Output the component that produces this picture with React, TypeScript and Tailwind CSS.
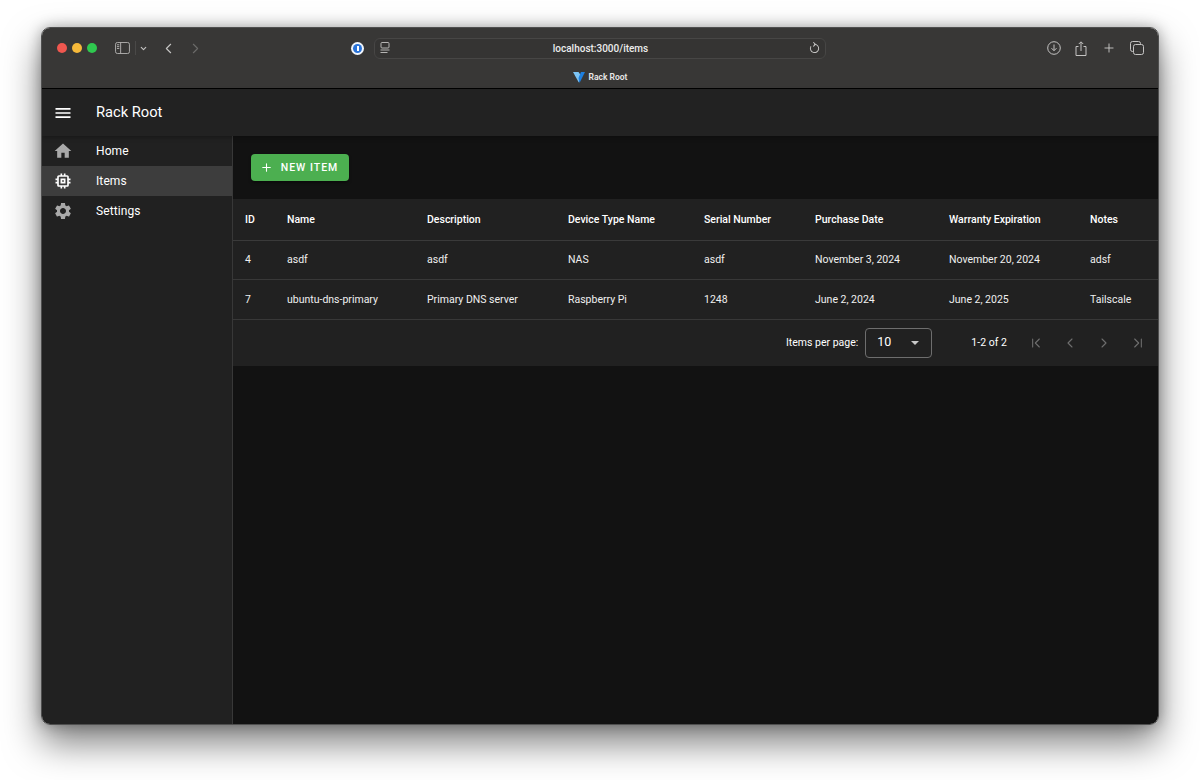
import { ChevronDown, ChevronLeft, ChevronRight, Plus, ChevronFirst, ChevronLast } from "lucide-react";

const columns = [
  { label: "ID", width: "w-[42px]" },
  { label: "Name", width: "w-[140px]" },
  { label: "Description", width: "w-[141px]" },
  { label: "Device Type Name", width: "w-[136px]" },
  { label: "Serial Number", width: "w-[111px]" },
  { label: "Purchase Date", width: "w-[134px]" },
  { label: "Warranty Expiration", width: "w-[141px]" },
  { label: "Notes", width: "w-[81px]" },
];

const rows = [
  ["4", "asdf", "asdf", "NAS", "asdf", "November 3, 2024", "November 20, 2024", "adsf"],
  ["7", "ubuntu-dns-primary", "Primary DNS server", "Raspberry Pi", "1248", "June 2, 2024", "June 2, 2025", "Tailscale"],
];

function MenuIcon() {
  return (
    <svg width="20" height="20" viewBox="0 0 24 24" fill="#ffffff">
      <path d="M3 18h18v-2H3v2zm0-5h18v-2H3v2zm0-7v2h18V6H3z" />
    </svg>
  );
}

function HomeIcon() {
  return (
    <svg width="20" height="20" viewBox="0 0 24 24" fill="#a9a9a9">
      <path d="M10 20v-6h4v6h5v-8h3L12 3 2 12h3v8z" />
    </svg>
  );
}

function ChipIcon() {
  return (
    <svg width="20" height="20" viewBox="0 0 24 24" fill="#ffffff">
      <path d="M15 9H9v6h6V9zm-2 4h-2v-2h2v2zm8-2V9h-2V7c0-1.1-.9-2-2-2h-2V3h-2v2h-2V3H9v2H7c-1.1 0-2 .9-2 2v2H3v2h2v2H3v2h2v2c0 1.1.9 2 2 2h2v2h2v-2h2v2h2v-2h2c1.1 0 2-.9 2-2v-2h2v-2h-2v-2h2zm-4 6H7V7h10v10z" />
    </svg>
  );
}

function GearIcon() {
  return (
    <svg width="20" height="20" viewBox="0 0 24 24" fill="#a9a9a9">
      <path d="M19.14 12.94c.04-.3.06-.61.06-.94 0-.32-.02-.64-.07-.94l2.03-1.58c.18-.14.23-.41.12-.61l-1.92-3.32c-.12-.22-.37-.29-.59-.22l-2.39.96c-.5-.38-1.03-.7-1.62-.94l-.36-2.54c-.04-.24-.24-.41-.48-.41h-3.84c-.24 0-.43.17-.47.41l-.36 2.54c-.59.24-1.13.57-1.62.94l-2.39-.96c-.22-.08-.47 0-.59.22L2.74 8.87c-.12.21-.08.47.12.61l2.03 1.58c-.05.3-.09.63-.09.94s.02.64.07.94l-2.03 1.58c-.18.14-.23.41-.12.61l1.92 3.32c.12.22.37.29.59.22l2.39-.96c.5.38 1.03.7 1.62.94l.36 2.54c.05.24.24.41.48.41h3.84c.24 0 .44-.17.47-.41l.36-2.54c.59-.24 1.13-.56 1.62-.94l2.39.96c.22.08.47 0 .59-.22l1.92-3.32c.12-.22.07-.47-.12-.61l-2.01-1.58zM12 15.6c-1.98 0-3.6-1.62-3.6-3.6s1.62-3.6 3.6-3.6 3.6 1.62 3.6 3.6-1.62 3.6-3.6 3.6z" />
    </svg>
  );
}

function SafariToolbar() {
  return (
    <div className="h-[61px] shrink-0 bg-[#383736] border-b border-black">
      <div className="h-[40px] flex items-center pl-[15px] pr-[14px]">
        <div className="flex gap-[5px]">
          <span className="w-[10px] h-[10px] rounded-full bg-[#f0574f]" />
          <span className="w-[10px] h-[10px] rounded-full bg-[#f6b93a]" />
          <span className="w-[10px] h-[10px] rounded-full bg-[#2fc84f]" />
        </div>
        <svg className="ml-[18px]" width="15" height="12" viewBox="0 0 16 13" fill="none" stroke="#b5b4b3" strokeWidth="1">
          <rect x="0.5" y="0.5" width="15" height="12" rx="2" />
          <path d="M6 0.5v12" />
          <path d="M2 3h2.5M2 5h2.5M2 7h2.5" />
        </svg>
        <span className="ml-[5px] w-px h-[14px] bg-[#4a4948]" />
        <ChevronDown className="ml-[3px] text-[#c4c3c2]" size={9} strokeWidth={3} />
        <ChevronLeft className="ml-[12px] text-[#c4c3c2]" size={17} strokeWidth={1.6} />
        <ChevronRight className="ml-[10px] text-[#6a6968]" size={17} strokeWidth={1.6} />

        <span className="ml-[147px] w-[13px] h-[13px] rounded-full bg-[#f2f6fb] flex items-center justify-center">
          <span className="w-[9px] h-[9px] rounded-full bg-[#2a73d8] flex items-center justify-center">
            <span className="w-[2px] h-[5px] bg-white" />
          </span>
        </span>

        <div className="ml-[10px] w-[452px] h-[21px] rounded-[6px] border border-[#474645] bg-[#353433] flex items-center px-[5px]">
          <svg width="10" height="12" viewBox="0 0 10 12" fill="none" stroke="#b5b4b3" strokeWidth="1">
            <rect x="1" y="0.5" width="8" height="5.5" rx="1" />
            <path d="M0.5 8h9M0.5 10.5h7" />
          </svg>
          <span className="flex-1 text-center pl-[2px] pt-[1px] text-[10px] leading-none font-medium text-[#ececec]">localhost:3000/items</span>
          <svg width="11" height="12" viewBox="0 0 24 26" fill="none" stroke="#c4c3c2" strokeWidth="2.2" strokeLinecap="round" strokeLinejoin="round">
            <path d="M12 5a9 9 0 1 1-8 5" />
            <path d="M10 1l4 4-4 4" />
          </svg>
        </div>

        <div className="ml-auto flex items-center gap-[14px]">
          <svg width="14" height="14" viewBox="0 0 14 14" fill="none" stroke="#c4c3c2" strokeWidth="1">
            <circle cx="7" cy="7" r="6.3" />
            <path d="M7 3.5v6M4.5 7.2L7 9.7l2.5-2.5" />
          </svg>
          <svg width="12" height="15" viewBox="0 0 12 15" fill="none" stroke="#c4c3c2" strokeWidth="1">
            <path d="M3.5 5.5H1v9h10v-9H8.5" />
            <path d="M6 10V1M3.8 3L6 0.8 8.2 3" />
          </svg>
          <Plus className="ml-[1px] text-[#d0cfce]" size={14} strokeWidth={1.5} />
          <svg width="14" height="14" viewBox="0 0 14 14" fill="none" stroke="#c4c3c2" strokeWidth="1">
            <rect x="3.5" y="3.5" width="10" height="10" rx="2" />
            <path d="M3 10.5H2.5a2 2 0 0 1-2-2v-6a2 2 0 0 1 2-2h6a2 2 0 0 1 2 2V3" />
          </svg>
        </div>
      </div>
      <div className="flex items-center justify-center gap-[4px] pt-[4px]">
        <svg width="12" height="11" viewBox="0 0 12 11">
          <path d="M0 0h5.5L8 3.5 5.8 10.5z" fill="#7cc4f5" />
          <path d="M5.5 6L8 0h4L6.5 11z" fill="#1d7fe0" />
        </svg>
        <span className="text-[8.5px] leading-none font-semibold text-[#e8e8e8]">Rack Root</span>
      </div>
    </div>
  );
}

function NavItem({ icon, label, active }: { icon: React.ReactNode; label: string; active?: boolean }) {
  return (
    <div className={`h-[30px] flex items-center pl-[11px] ${active ? "bg-[#3d3d3d]" : ""}`}>
      <span className="w-[43px] flex shrink-0">{icon}</span>
      <span className="text-[12px] text-white tracking-[0.1px]">{label}</span>
    </div>
  );
}

export default function App() {
  return (
    <div className="w-[1200px] h-[780px] overflow-hidden bg-white pt-[27px] px-[41px] font-['Roboto',sans-serif]">
      <div className="w-[1118px] h-[698px] rounded-[9px] overflow-hidden flex flex-col border border-[#4f4f4f] shadow-[0_18px_36px_rgba(0,0,0,0.5),0_0_14px_rgba(0,0,0,0.3)]">
        <SafariToolbar />
        <header className="h-[47px] shrink-0 bg-[#222222] flex items-center pl-[11px] shadow-[0_2px_4px_rgba(0,0,0,0.25)] relative">
          <MenuIcon />
          <span className="ml-[23px] text-[14.7px] text-white">Rack Root</span>
        </header>
        <div className="flex-1 flex min-h-0">
          <aside className="w-[191px] shrink-0 bg-[#212121] border-r border-[#383838]">
            <NavItem icon={<HomeIcon />} label="Home" />
            <NavItem icon={<ChipIcon />} label="Items" active />
            <NavItem icon={<GearIcon />} label="Settings" />
          </aside>
          <main className="flex-1 bg-[#121212] min-w-0">
            <div className="h-[63px] pt-[18px] pl-[18px]">
              <button className="w-[98px] h-[27px] rounded-[4px] bg-[#4caf50] flex items-center justify-center gap-[8px] pr-[2px] text-[10.5px] font-medium tracking-[1px] text-white shadow-[0_2px_3px_rgba(0,0,0,0.4)]">
                <Plus size={13} strokeWidth={2} />
                NEW ITEM
              </button>
            </div>
            <div className="bg-[#212121]">
              <table className="w-full table-fixed border-collapse text-[10.5px] text-white">
                <thead>
                  <tr className="h-[41px] border-b border-[#3a3a3a]">
                    {columns.map((c) => (
                      <th key={c.label} className={`${c.width} pl-[12px] pt-[1px] text-left font-medium whitespace-nowrap`}>
                        {c.label}
                      </th>
                    ))}
                  </tr>
                </thead>
                <tbody>
                  {rows.map((row) => (
                    <tr key={row[0]} className="h-[39.5px] border-b border-[#383838]">
                      {row.map((cell, i) => (
                        <td key={i} className="pl-[12px] pt-[1px] text-left font-normal whitespace-nowrap text-[#f0f0f0]">
                          {cell}
                        </td>
                      ))}
                    </tr>
                  ))}
                </tbody>
              </table>
              <div className="h-[46px] flex items-center pl-[553px] text-[10.5px] text-white">
                <span>Items per page:</span>
                <div className="ml-[7px] w-[67px] h-[30px] rounded-[4px] border border-[#6e6e6e] flex items-center justify-between pl-[11px] pr-[12px]">
                  <span className="text-[12.5px]">10</span>
                  <span className="w-0 h-0 border-x-[4px] border-x-transparent border-t-[4px] border-t-[#c8c8c8]" />
                </div>
                <span className="ml-[39px]">1-2 of 2</span>
                <div className="ml-[21px] flex items-center gap-[18px] text-[#6f6f6f]">
                  <ChevronFirst size={16} strokeWidth={1.6} />
                  <ChevronLeft size={16} strokeWidth={1.6} />
                  <ChevronRight size={16} strokeWidth={1.6} />
                  <ChevronLast size={16} strokeWidth={1.6} />
                </div>
              </div>
            </div>
          </main>
        </div>
      </div>
    </div>
  );
}
